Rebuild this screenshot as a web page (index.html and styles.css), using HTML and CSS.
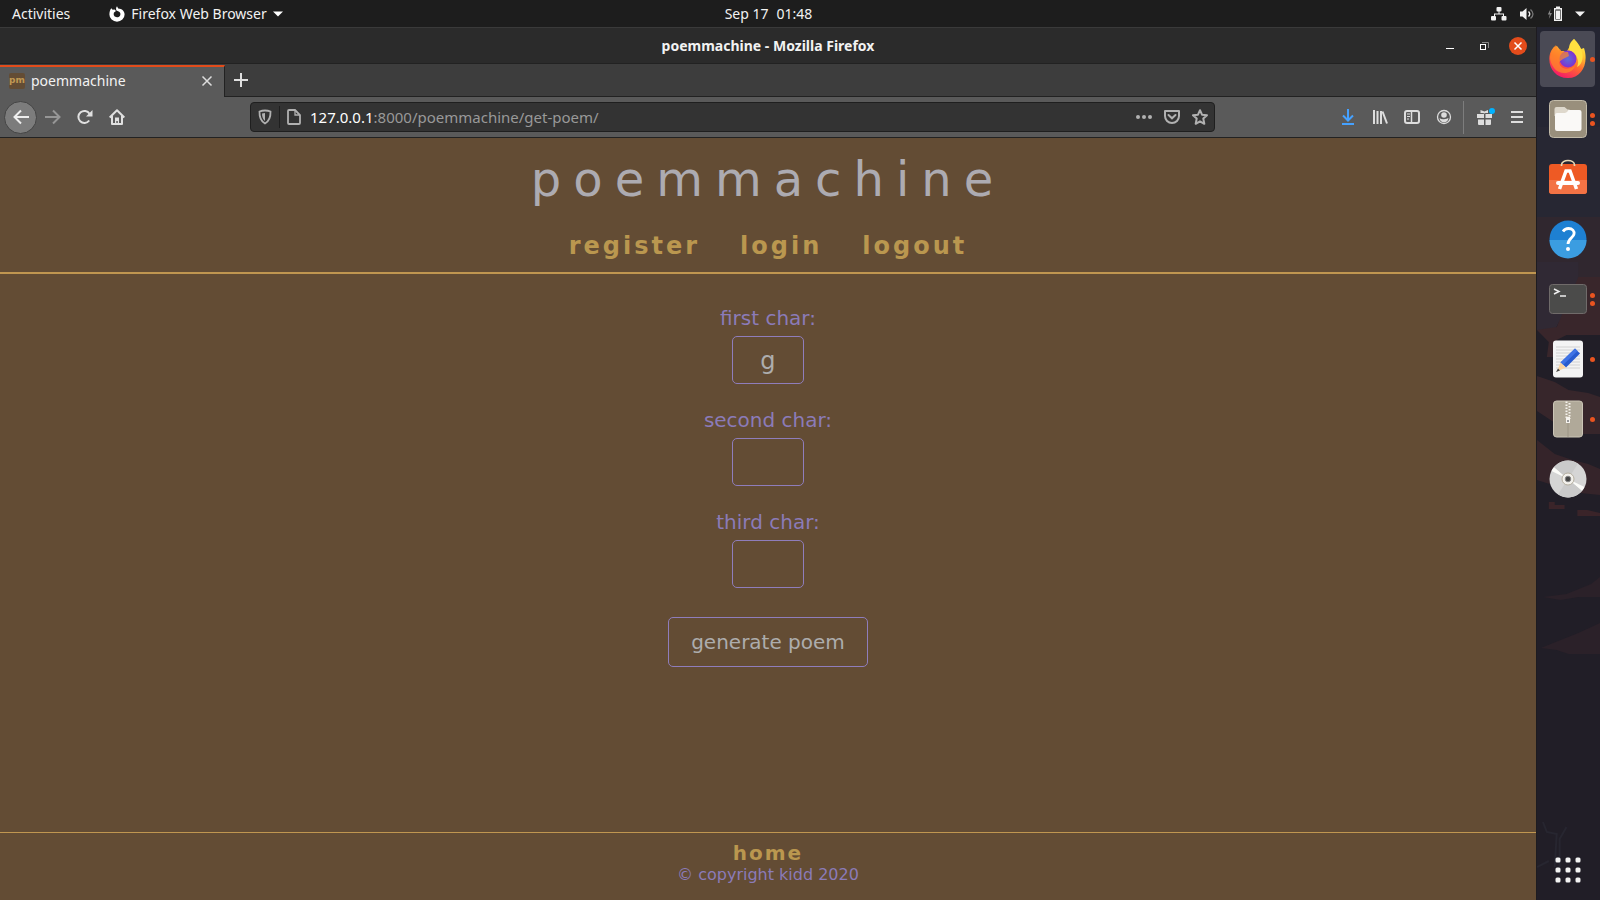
FILE: index.html
```html
<!DOCTYPE html>
<html lang="en">
<head>
<meta charset="utf-8">
<title>poemmachine</title>
<link rel="stylesheet" href="styles.css">
</head>
<body class="desktop">
<header class="topbar">
  <div class="topbar-left">
    <button class="bar-button" type="button">Activities</button>
    <button class="bar-button app-menu" type="button">
      <svg class="icon" width="16" height="16" viewBox="0 0 16 16"><path d="M8 .3 9.2 2.4C13 2.6 15.6 5 15.6 8.5A7.6 7.2 0 0 1 .4 8.5C.4 6 1 3.8 2.3 2.2L3.6 3.8 5.6 3.6 7 5 5 6.6C4 9.3 5.6 11.3 8 11.3 10.6 11.3 12 9.2 11.2 7 10.6 5.6 9 5.4 7.4 4.6 6.8 3 7 1.4 8 .3Z" fill="#fff"/></svg>
      <span>Firefox Web Browser</span>
      <svg class="icon" width="10" height="6" viewBox="0 0 10 6"><path d="M0 .5h10L5 5.5Z" fill="#fff"/></svg>
    </button>
  </div>
  <button class="bar-button clock" type="button"><span>Sep 17</span><span>01:48</span></button>
  <div class="tray">
    <svg width="16" height="14" viewBox="0 0 16 14" fill="#f2f2f2"><rect x="5.500" y="0" width="5" height="4.500" rx="1"/><rect x="0" y="9" width="5" height="4.500" rx="1"/><rect x="10.500" y="9" width="5" height="4.500" rx="1"/><path d="M7.500 4h1v2.500H13V9h-1V7.500H4V9H3V6.500h4.500Z"/></svg>
    <svg width="16" height="14" viewBox="0 0 16 14"><path d="M1 4.500h2.500L7.500 1v12L3.500 9.500H1Z" fill="#f2f2f2"/><path d="M9.500 4.500q2.500 2.500 0 5" fill="none" stroke="#f2f2f2" stroke-width="1.400"/><path d="M11.500 2.500q5 4.500 0 9" fill="none" stroke="#777" stroke-width="1.300"/></svg>
    <svg width="16" height="16" viewBox="0 0 16 16"><path d="M3.500 3 .8 8.500h2L1.800 13 5 7H3Z" fill="#888"/><path d="M9 .5h4V2h2v13H7V2h2ZM8.400 3.400v10.200h5.200V3.400Z" fill="#f2f2f2" fill-rule="evenodd"/><rect x="9" y="4.500" width="4" height="8.500" fill="#f2f2f2"/></svg>
    <svg width="10" height="6" viewBox="0 0 10 6"><path d="M0 .5h10L5 5.500Z" fill="#f2f2f2"/></svg>
  </div>
</header>

<div class="workspace">
  <div class="window">
    <div class="titlebar">
      <span class="window-title">poemmachine - Mozilla Firefox</span>
      <div class="window-controls">
        <button class="plain" type="button" aria-label="Minimize"><svg width="18" height="18" viewBox="0 0 18 18"><path d="M5 11.500h8" stroke="#fff"/></svg></button>
        <button class="plain" type="button" aria-label="Restore"><svg width="18" height="18" viewBox="0 0 18 18" fill="none"><path d="M7 5.500h6.500V11" stroke="#888"/><rect x="5.500" y="7.500" width="5" height="5" stroke="#fff"/></svg></button>
        <button class="plain" type="button" aria-label="Close"><svg width="18" height="18" viewBox="0 0 18 18"><circle cx="9" cy="9" r="9" fill="#e34c1b"/><path d="m5.500 5.500 7 7m0-7-7 7" stroke="#fff" stroke-width="1.500"/></svg></button>
      </div>
    </div>

    <div class="tabs">
      <div class="tab">
        <span class="favicon">pm</span>
        <span class="tab-title">poemmachine</span>
        <button class="plain" type="button" aria-label="Close tab"><svg width="16" height="16" viewBox="0 0 16 16"><path d="m3.500 3.500 9 9m0-9-9 9" stroke="#ddd" stroke-width="1.500"/></svg></button>
      </div>
      <button class="plain new-tab" type="button" aria-label="New tab"><svg width="16" height="16" viewBox="0 0 16 16"><path d="M1 8h14M8 1v14" stroke="#e0e0e0" stroke-width="2"/></svg></button>
    </div>

    <nav class="toolbar" aria-label="Browser">
      <div class="nav-buttons">
        <button class="plain back" type="button" aria-label="Back"><svg width="16" height="16" viewBox="0 0 16 16"><path d="M16 8H2M8 1.500 1.500 8 8 14.500" fill="none" stroke="#eee" stroke-width="2"/></svg></button>
        <button class="plain tool" type="button" aria-label="Forward"><svg width="16" height="16" viewBox="0 0 16 16"><path d="M0 8h14M8 1.500 14.500 8 8 14.500" fill="none" stroke="#969696" stroke-width="2"/></svg></button>
        <button class="plain tool" type="button" aria-label="Reload"><svg width="16" height="16" viewBox="0 0 16 16"><path d="M12.200 11.500A6 6 0 1 1 12.500 4.800" fill="none" stroke="#e0e0e0" stroke-width="2"/><path d="M15.500 1v6.500H9Z" fill="#e0e0e0"/></svg></button>
        <button class="plain tool" type="button" aria-label="Home"><svg width="16" height="16" viewBox="0 0 16 16"><path d="M.7 8.500 8 1.300l7.300 7.200M3 7v8h10V7" fill="none" stroke="#e0e0e0" stroke-width="2" stroke-linejoin="round"/><path d="M6 15V8.500h4V15H8.800v-3H7.300v3Z" fill="#e0e0e0"/></svg></button>
      </div>
      <div class="urlbar">
        <svg width="16" height="16" viewBox="0 0 16 16"><path d="M8 1.500q3 0 5.500 1c.2 5.500-1 9.500-5.500 12C3.500 12 2.300 8 2.500 2.500 5 1.500 8 1.500 8 1.500Z" fill="none" stroke="#b1b1b1" stroke-width="1.800"/><path d="M8 4v8C5.800 10 5 8 5 4.500Z" fill="#b1b1b1"/></svg>
        <span class="url-divider"></span>
        <svg width="16" height="16" viewBox="0 0 16 16"><path d="M3 1h6l5 5v8a1 1 0 0 1-1 1H3a1 1 0 0 1-1-1V2a1 1 0 0 1 1-1Z" fill="none" stroke="#b1b1b1" stroke-width="1.800"/><path d="M9 1v5h5" fill="none" stroke="#b1b1b1" stroke-width="1.300"/></svg>
        <div class="url" role="textbox" aria-label="Address" contenteditable="true" spellcheck="false"><span class="url-host">127.0.0.1</span>:8000/poemmachine/get-poem/</div>
        <div class="url-actions">
          <button class="plain" type="button" aria-label="Page actions"><svg width="16" height="16" viewBox="0 0 16 16" fill="#b1b1b1"><circle cx="2" cy="8" r="2"/><circle cx="8" cy="8" r="2"/><circle cx="14" cy="8" r="2"/></svg></button>
          <button class="plain" type="button" aria-label="Save to Pocket"><svg width="16" height="16" viewBox="0 0 16 16" fill="none" stroke="#b1b1b1" stroke-width="2"><path d="M1 2h14v5A7 7 0 0 1 1 7Z" stroke-linejoin="round"/><path d="m4.500 6 3.500 3.300L11.500 6" stroke-linecap="round"/></svg></button>
          <button class="plain" type="button" aria-label="Bookmark"><svg width="16" height="16" viewBox="0 0 16 16"><path d="m8 1.200 2 4.500 5 .5-3.700 3.400 1 5.200L8 12.300l-4.300 2.500 1-5.200L1 6.200l5-.5Z" fill="none" stroke="#b1b1b1" stroke-width="2" stroke-linejoin="round"/></svg></button>
        </div>
      </div>
      <div class="tools">
        <button class="plain tool" type="button" aria-label="Downloads"><svg width="16" height="16" viewBox="0 0 16 16" fill="none" stroke="#45a1ff" stroke-width="2"><path d="M8 0v11M3 6.500l5 5 5-5M2 15h12"/></svg></button>
        <button class="plain tool" type="button" aria-label="Library"><svg width="16" height="16" viewBox="0 0 16 16" fill="none" stroke="#ddd" stroke-width="2"><path d="M2 1v14M5.500 2v13M9 2v13M10.500 2.500l4.500 12"/></svg></button>
        <button class="plain tool" type="button" aria-label="Sidebars"><svg width="16" height="16" viewBox="0 0 16 16" fill="none" stroke="#ddd"><rect x="1" y="2" width="14" height="12" rx="2" stroke-width="2"/><path d="M7.500 2v12" stroke-width="1.500"/><path d="M3 5h3M3 7.500h3M3 10h2"/></svg></button>
        <button class="plain tool" type="button" aria-label="Account"><svg width="16" height="16" viewBox="0 0 16 16"><circle cx="8" cy="8" r="6.500" fill="none" stroke="#ddd" stroke-width="1.300"/><circle cx="8" cy="6" r="2.800" fill="#ddd"/><path d="M3.500 9Q5 10.500 8 10.300T12.500 9Q11.800 13.300 8 13.300T3.500 9Z" fill="#ddd"/></svg></button>
        <span class="tool-divider"></span>
        <button class="plain tool gift" type="button" aria-label="What's new"><svg width="20" height="18" viewBox="0 0 20 18" fill="#ddd"><path d="M2 6h7v4H2ZM10.500 6h6.500v4H10.500ZM3 11.500h6V17H4a1 1 0 0 1-1-1ZM10.500 11.500H16V16a1 1 0 0 1-1 1h-4.500Z"/><path d="M5.500 2 9.500 3.500 13 2v3H10.500L9.500 5.500 8 5H5.500Z"/><circle cx="17" cy="3" r="3" fill="#00b3ff"/></svg></button>
        <button class="plain tool" type="button" aria-label="Menu"><svg width="16" height="16" viewBox="0 0 16 16"><path d="M2 3h12M2 8h12M2 13h12" stroke="#ddd" stroke-width="2"/></svg></button>
      </div>
    </nav>

    <div class="page">
      <header class="site-header">
        <h1 class="site-title">poemmachine</h1>
        <nav class="site-nav"><a href="#register">register</a><a href="#login">login</a><a href="#logout">logout</a></nav>
      </header>
      <main class="site-main">
        <form class="poem-form">
          <div class="field"><label for="first">first char:</label><input id="first" type="text" maxlength="1" value="g"></div>
          <div class="field"><label for="second">second char:</label><input id="second" type="text" maxlength="1"></div>
          <div class="field"><label for="third">third char:</label><input id="third" type="text" maxlength="1"></div>
          <button class="generate" type="submit">generate poem</button>
        </form>
      </main>
      <footer class="site-footer"><a href="#home">home</a><p>© copyright kidd 2020</p></footer>
    </div>
  </div>

  <aside class="dock">
    <svg class="wallpaper" viewBox="0 0 64 873" preserveAspectRatio="none">
      <rect width="64" height="873" fill="#211e27"/>
      <path d="M0 0h64v190H0Z" fill="#242532"/>
      <path d="M0 100h64v90H0Z" fill="#272733"/>
      <path d="M0 190h64v88H0Z" fill="#30272f"/>
      <path d="M0 235h42v25L18 303H0Z" fill="#302934"/>
      <path d="M42 250h22v58H30l-10 5 8 17H10l2-15-12-12 20-3Z" fill="#39262b"/>
      <path d="M0 349l18 6 14 8 20 3 12 4v37H40L26 401 0 384Z" fill="#37262b"/>
      <path d="M0 413l18 14 18 6 16 4 12 5v26l-20-2-14-6-14-2-16-5Z" fill="#35242a"/>
      <path d="M12 475h6v3h10v4H12ZM41 483h10l13 3v3H41Z" fill="#3a2429"/>
      <path d="M6 570l24-3 15-6 10-4 9-7v20H42l-18 3ZM4 621l20-8 18-7 22-10v31H32l-12-4Z" fill="#2b2129"/>
      <path d="M6 795l4 10 10 2-2 33M30 800l-7 12v35M0 840l12-6" fill="none" stroke="#272630" stroke-width="2"/>
    </svg>
    <div class="dock-apps">
      <button class="plain app active" type="button" aria-label="Firefox">
        <svg width="40" height="40" viewBox="0 0 40 40"><defs><linearGradient id="fx" x1=".8" y1="0" x2=".3" y2="1"><stop offset="0" stop-color="#fff44f"/><stop offset=".3" stop-color="#ffc52f"/><stop offset=".6" stop-color="#ff6a2f"/><stop offset="1" stop-color="#f5156c"/></linearGradient><radialGradient id="gl"><stop offset="0" stop-color="#5a6fd8"/><stop offset="1" stop-color="#8030d0"/></radialGradient></defs><path d="M26 0c4 4 6 7 7 10l3-1c5 15-2 30-16 30C7 39 0 28 1.500 17 2 13 4 10 6 8L9 7l4 5h6Z" fill="url(#fx)"/><path d="M26 0c-6 5-5 9-4 12 7 3 10 10 7 16 6-3 7-11 4-18Z" fill="#ffe040"/><circle cx="20" cy="20" r="8.500" fill="url(#gl)"/><path d="M2 18Q3 12 6 8L8 6l2 6 2-2 2 3 6 0 1 4-6 3-4 3c1 7 9 9 16 4-3 9-16 9-21 2-3-4-4-8-4-11Z" fill="#ff8a28" opacity=".7"/></svg>
        <span class="dots"><i></i></span></button>
      <button class="plain app" type="button" aria-label="Files">
        <svg width="40" height="40" viewBox="0 0 40 40"><rect x="1.500" y="1.500" width="37" height="37" rx="4" fill="#998f7c" stroke="#c2bba9"/><path d="M6.500 17V10a2 2 0 0 1 2-2h8l3 2.500h2V17Z" fill="#ded8cc"/><path d="M7 16q0-2 2-2h8q2 0 3.500-3h11q2 0 2 2v17q0 2-2 2H9q-2 0-2-2Z" fill="#faf9f7"/></svg>
        <span class="dots"><i></i><i></i></span></button>
      <button class="plain app" type="button" aria-label="Software">
        <svg width="40" height="40" viewBox="0 2 40 40"><rect x="1" y="7" width="38" height="30" rx="3" fill="#ee5a24"/><path d="M1 23h38v11a3 3 0 0 1-3 3H4a3 3 0 0 1-3-3Z" fill="#f37345"/><path d="M13.500 9V8c0-6 13-6 13 0v1" fill="none" stroke="#e6d8b4" stroke-width="1.700"/><path d="M11.500 32 18 14h4l6.500 18" fill="none" stroke="#fff" stroke-width="3.500"/><rect x="8" y="24" width="24" height="4" rx="2" fill="#fff"/></svg></button>
      <button class="plain app" type="button" aria-label="Help">
        <svg width="40" height="40" viewBox="0 0 40 40"><circle cx="20" cy="20" r="18.500" fill="#1e80d2"/><path d="M1.500 21h37a18.500 18.500 0 0 1-37 0Z" fill="#3b9de1"/><path d="M15 12.500q2-3 5.500-3c4 0 6 2.500 5.500 5.500-.4 3.500-6 4.500-6 10" fill="none" stroke="#fff" stroke-width="2.800"/><circle cx="20" cy="30" r="2" fill="#fff"/></svg></button>
      <button class="plain app" type="button" aria-label="Terminal">
        <svg width="40" height="40" viewBox="0 0 40 40"><rect x="1.500" y="5.500" width="37" height="29" rx="3" fill="#4b4b4a" stroke="#706b6a"/><path d="m6 10 5 2.500L6 15M12 17h6" fill="none" stroke="#eee" stroke-width="1.500"/></svg>
        <span class="dots"><i></i><i></i></span></button>
      <button class="plain app" type="button" aria-label="Text editor">
        <svg width="40" height="40" viewBox="0 0 40 40"><rect x="5" y="1.500" width="30" height="37" rx="3" fill="#f4f4f4"/><path d="M8 8h24M8 11h24M8 14h24M8 17h24M8 20h24M8 23h24M8 26h24M8 29h24" stroke="#d2d2d2"/><path d="M27 9.500 32 14.500 18 28.500 12.500 23.500Z" fill="#285bcf"/><path d="m27 9.500 2.500 2.500-14.500 14-2.500-2.500Z" fill="#3f73e5"/><path d="m12.500 23.500 5.500 5-9 4Z" fill="#fbd5a2"/><path d="m10 29.500 2 2-4 1.500Z" fill="#444"/></svg>
        <span class="dots"><i></i></span></button>
      <button class="plain app" type="button" aria-label="Archive manager">
        <svg width="40" height="40" viewBox="0 0 40 40"><rect x="5.500" y="2" width="29" height="36" rx="3" fill="#b0a999" stroke="#cbc5b6"/><path d="M20 24v14" stroke="#9b9484"/><path d="M18.500 2.500v17M21.500 4v16" stroke="#f5f3ee" stroke-width="2" stroke-dasharray="1.500 1.500"/><path d="M18 18h4v6h-4Z" fill="#f5f3ee"/><path d="M19 21h2v2h-2Z" fill="#999"/></svg>
        <span class="dots"><i></i></span></button>
      <button class="plain app" type="button" aria-label="Disc">
        <svg width="40" height="40" viewBox="0 0 40 40"><circle cx="20" cy="20" r="18.500" fill="#d5d5d5"/><path d="M20 20 3.500 12A18.500 18.500 0 0 1 6 8ZM20 20 36.500 28A18.500 18.500 0 0 1 34 32Z" fill="#fbfbf8"/><path d="M20 20 6 8A18.500 18.500 0 0 1 30 4.500ZM20 20 34 32A18.500 18.500 0 0 1 10 35.500Z" fill="#cacaca"/><circle cx="20" cy="20" r="6" fill="#f3f1ec" stroke="#b5afa0"/><circle cx="20" cy="20" r="2.800" fill="#444" stroke="#888"/></svg></button>
    </div>
    <button class="plain app" type="button" aria-label="Show applications"><svg width="40" height="40" viewBox="0 0 40 40" fill="#f2f2f2"><rect x="7.500" y="7.500" width="5" height="5" rx="1.500"/><rect x="17.500" y="7.500" width="5" height="5" rx="1.500"/><rect x="27.500" y="7.500" width="5" height="5" rx="1.500"/><rect x="7.500" y="17.500" width="5" height="5" rx="1.500"/><rect x="17.500" y="17.500" width="5" height="5" rx="1.500"/><rect x="27.500" y="17.500" width="5" height="5" rx="1.500"/><rect x="7.500" y="27.500" width="5" height="5" rx="1.500"/><rect x="17.500" y="27.500" width="5" height="5" rx="1.500"/><rect x="27.500" y="27.500" width="5" height="5" rx="1.500"/></svg></button>
  </aside>
</div>
</body>
</html>
```
FILE: styles.css
```css
* {
  box-sizing: border-box;
}

.desktop {
  margin: 0;
  min-height: 100vh;
  display: flex;
  flex-direction: column;
  background: #211e27;
  color: #f2f2f2;
  font: 14px/20px "Noto Sans", sans-serif;
}

svg {
  display: block;
  flex: none;
}

.plain,
.bar-button {
  margin: 0;
  padding: 0;
  border: 0;
  background: none;
  color: inherit;
  font: inherit;
}

/* System bar */

.topbar {
  display: grid;
  grid-template-columns: 1fr auto 1fr;
  align-items: center;
  height: 27px;
  padding: 0 15px 0 12px;
  background: #1d1d1d;
}

.topbar-left,
.app-menu,
.clock,
.tray {
  display: flex;
  align-items: center;
}

.topbar-left {
  gap: 39px;
}

.app-menu {
  gap: 6px;
}

.clock {
  gap: 8px;
  margin-right: 60px;
}

.tray {
  justify-content: flex-end;
  gap: 12px;
}

.workspace {
  flex: 1;
  display: grid;
  grid-template-columns: 1fr 64px;
}

/* Browser window */

.window {
  display: flex;
  flex-direction: column;
}

.titlebar {
  display: grid;
  grid-template-columns: 1fr auto 1fr;
  align-items: center;
  height: 37px;
  padding: 0 9px;
  border-top: 1px solid #3a3a3a;
  border-bottom: 1px solid #222;
  background: #2b2b2b;
}

.window-title {
  grid-column: 2;
  font-weight: 700;
}

.window-controls {
  display: flex;
  justify-content: flex-end;
  gap: 16px;
}

.tabs {
  display: flex;
  height: 33px;
  border-bottom: 1px solid #222;
  background: #3d3d3d;
}

.tab {
  display: flex;
  align-items: center;
  gap: 6px;
  width: 225px;
  height: 32px;
  margin-top: 1px;
  padding: 0 9px 2px;
  border-top: 2px solid #e34c1b;
  border-right: 1px solid #222;
  background: #5a5a5a;
}

.favicon {
  width: 16px;
  height: 16px;
  border-radius: 2px;
  background: #634c34;
  color: #c09853;
  font: 700 9px/14px "DejaVu Sans", sans-serif;
  text-align: center;
}

.tab-title {
  flex: 1;
}

.new-tab {
  padding: 0 8px;
}

.toolbar {
  display: flex;
  align-items: center;
  gap: 117px;
  height: 41px;
  padding: 0 3px 0 4px;
  border-bottom: 1px solid #222;
  background: #5a5a5a;
}

.nav-buttons,
.tools {
  display: flex;
  align-items: center;
}

.back {
  display: grid;
  place-items: center;
  width: 33px;
  height: 33px;
  border: 1px solid #444;
  border-radius: 50%;
  background: #7c7c7c;
}

.tool {
  display: grid;
  place-items: center;
  width: 32px;
  height: 32px;
}

.tool-divider {
  width: 1px;
  height: 33px;
  margin: 0 5px 0 3px;
  background: #7d7d7d;
}

.urlbar {
  flex: 1;
  display: flex;
  align-items: center;
  gap: 6px;
  height: 30px;
  padding: 0 6px;
  border: 1px solid #1f1f1f;
  border-radius: 4px;
  background: #333;
}

.url-divider {
  width: 1px;
  height: 22px;
  background: #1f1f1f;
}

.url {
  flex: 1;
  margin-left: 2px;
  color: #999;
  font-size: 15px;
  outline: 0;
}

.url-host {
  color: #fff;
}

.url-actions {
  display: flex;
  gap: 12px;
}

/* Site */

.page {
  flex: 1;
  display: flex;
  flex-direction: column;
  background: #634c34;
  color: #8b7bb8;
  font-family: "DejaVu Sans", sans-serif;
}

.site-header {
  padding: 13px 0 11px;
  border-bottom: 2px solid #c09650;
  text-align: center;
}

.site-title {
  margin: 0 0 24px;
  color: #adabb1;
  font-size: 48px;
  font-weight: 400;
  line-height: 56px;
  letter-spacing: 12px;
}

.site-nav {
  display: flex;
  justify-content: center;
  gap: 40px;
  font-size: 24px;
  line-height: 30px;
}

.site-nav a,
.site-footer a {
  color: #ba974f;
  font-weight: 700;
  letter-spacing: 3px;
  text-decoration: none;
}

.site-main {
  flex: 1;
  padding-top: 32px;
}

.poem-form,
.field {
  display: flex;
  flex-direction: column;
  align-items: center;
}

.poem-form {
  gap: 24px;
  font-size: 20px;
  line-height: 24px;
}

.field {
  gap: 6px;
}

.field input,
.generate {
  border: 1px solid #8f7dbb;
  border-radius: 5px;
  background: transparent;
  color: #adadad;
  font-family: inherit;
}

.field input {
  width: 72px;
  height: 48px;
  padding: 2px 12px 0;
  font-size: 24px;
  text-align: center;
}

.generate {
  margin-top: 5px;
  padding: 12px 22px;
  font-size: 20px;
  line-height: 24px;
}

.site-footer {
  display: flex;
  flex-direction: column;
  align-items: center;
  padding: 8px 0 15px;
  border-top: 1px solid #c09650;
  font-size: 16px;
}

.site-footer a {
  font-size: 20px;
  line-height: 24px;
  letter-spacing: 2px;
}

.site-footer p {
  margin: 0;
  line-height: 20px;
}

/* Dock */

.dock {
  position: relative;
  display: flex;
  flex-direction: column;
  justify-content: space-between;
  padding: 4px 5px 2px 3px;
  border-left: 1px solid #1d1b20;
}

.wallpaper {
  position: absolute;
  inset: 0;
  width: 100%;
  height: 100%;
}

.dock-apps {
  display: flex;
  flex-direction: column;
  gap: 4px;
}

.app {
  position: relative;
  display: grid;
  place-items: center;
  height: 56px;
  border-radius: 4px;
}

.active {
  background: #4a4a55;
}

.dots {
  position: absolute;
  right: 0;
  top: 0;
  bottom: 0;
  display: flex;
  flex-direction: column;
  justify-content: center;
  gap: 3px;
}

.dots i {
  width: 5px;
  height: 5px;
  border-radius: 50%;
  background: #e95420;
}
```
